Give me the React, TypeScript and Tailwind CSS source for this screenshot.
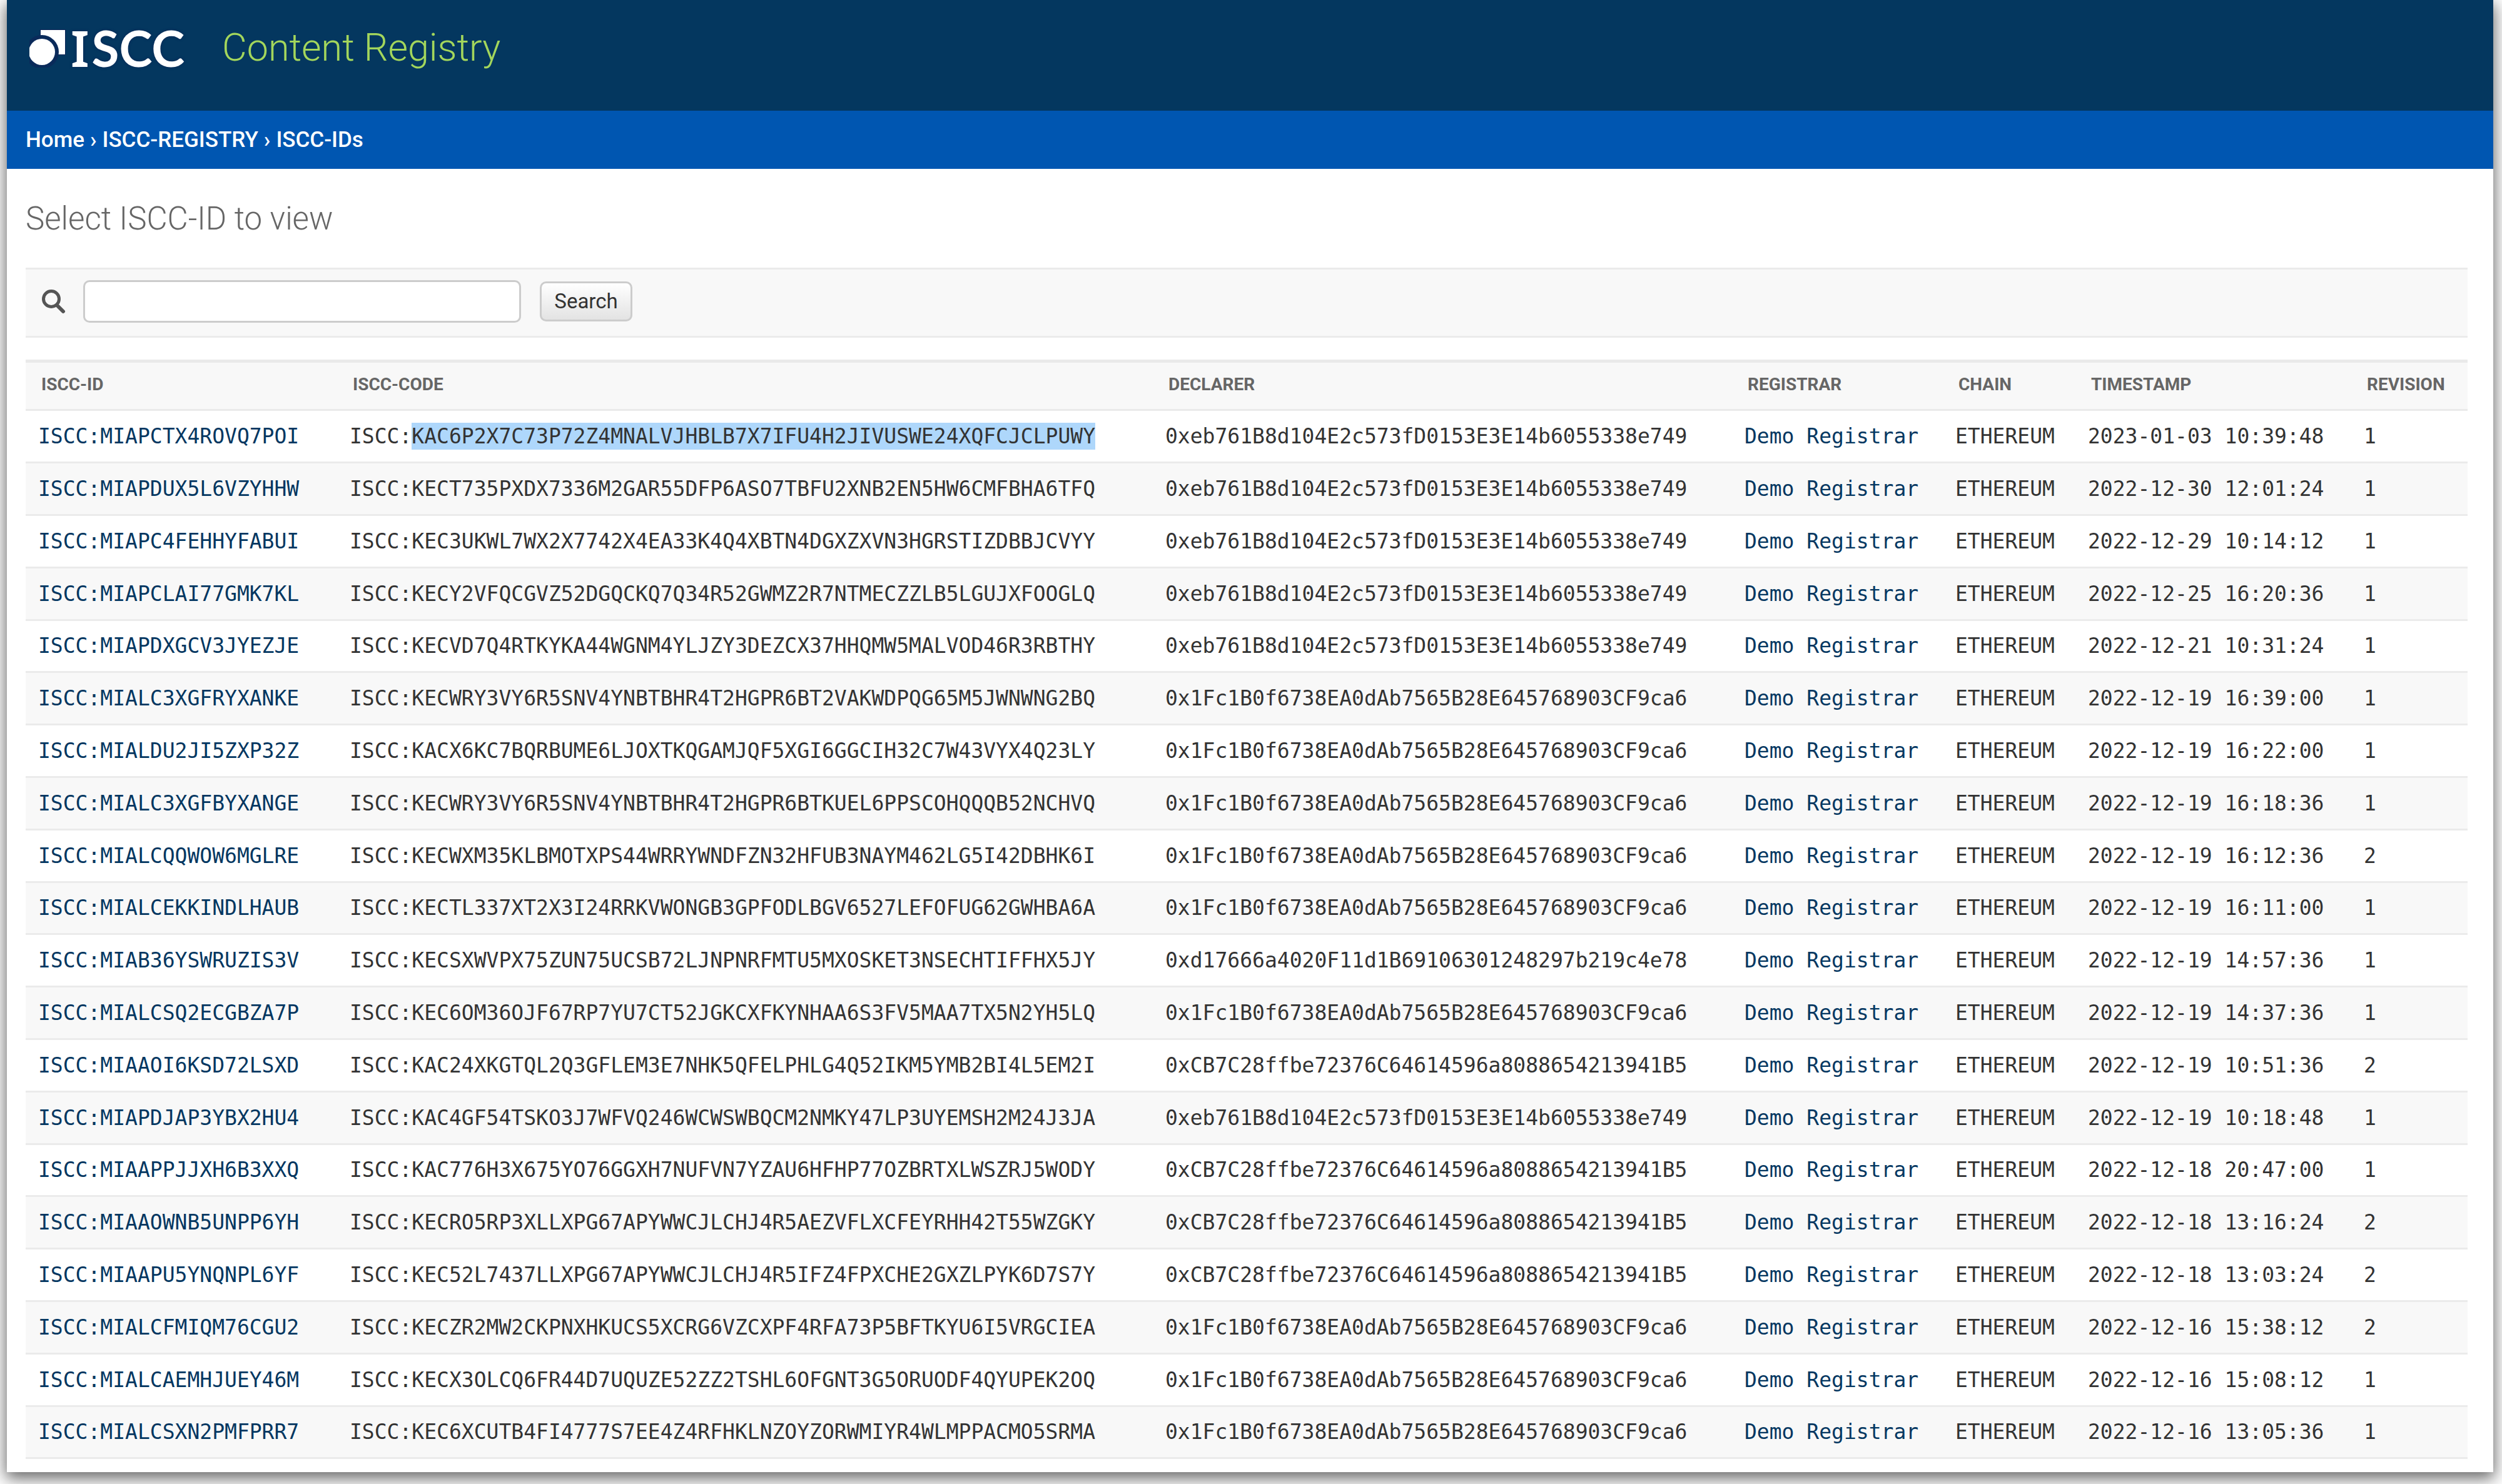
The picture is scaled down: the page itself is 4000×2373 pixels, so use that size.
import { useState } from 'react';

type Row = { id: string; code: string; declarer: string; timestamp: string; revision: number };

const EB = '0xeb761B8d104E2c573fD0153E3E14b6055338e749';
const FC = '0x1Fc1B0f6738EA0dAb7565B28E645768903CF9ca6';
const D1 = '0xd17666a4020F11d1B69106301248297b219c4e78';
const CB = '0xCB7C28ffbe72376C64614596a8088654213941B5';

const rows: Row[] = [
  { id: 'MIAPCTX4ROVQ7POI', code: 'KAC6P2X7C73P72Z4MNALVJHBLB7X7IFU4H2JIVUSWE24XQFCJCLPUWY', declarer: EB, timestamp: '2023-01-03 10:39:48', revision: 1 },
  { id: 'MIAPDUX5L6VZYHHW', code: 'KECT735PXDX7336M2GAR55DFP6ASO7TBFU2XNB2EN5HW6CMFBHA6TFQ', declarer: EB, timestamp: '2022-12-30 12:01:24', revision: 1 },
  { id: 'MIAPC4FEHHYFABUI', code: 'KEC3UKWL7WX2X7742X4EA33K4Q4XBTN4DGXZXVN3HGRSTIZDBBJCVYY', declarer: EB, timestamp: '2022-12-29 10:14:12', revision: 1 },
  { id: 'MIAPCLAI77GMK7KL', code: 'KECY2VFQCGVZ52DGQCKQ7Q34R52GWMZ2R7NTMECZZLB5LGUJXFOOGLQ', declarer: EB, timestamp: '2022-12-25 16:20:36', revision: 1 },
  { id: 'MIAPDXGCV3JYEZJE', code: 'KECVD7Q4RTKYKA44WGNM4YLJZY3DEZCX37HHQMW5MALVOD46R3RBTHY', declarer: EB, timestamp: '2022-12-21 10:31:24', revision: 1 },
  { id: 'MIALC3XGFRYXANKE', code: 'KECWRY3VY6R5SNV4YNBTBHR4T2HGPR6BT2VAKWDPQG65M5JWNWNG2BQ', declarer: FC, timestamp: '2022-12-19 16:39:00', revision: 1 },
  { id: 'MIALDU2JI5ZXP32Z', code: 'KACX6KC7BQRBUME6LJOXTKQGAMJQF5XGI6GGCIH32C7W43VYX4Q23LY', declarer: FC, timestamp: '2022-12-19 16:22:00', revision: 1 },
  { id: 'MIALC3XGFBYXANGE', code: 'KECWRY3VY6R5SNV4YNBTBHR4T2HGPR6BTKUEL6PPSCOHQQQB52NCHVQ', declarer: FC, timestamp: '2022-12-19 16:18:36', revision: 1 },
  { id: 'MIALCQQWOW6MGLRE', code: 'KECWXM35KLBMOTXPS44WRRYWNDFZN32HFUB3NAYM462LG5I42DBHK6I', declarer: FC, timestamp: '2022-12-19 16:12:36', revision: 2 },
  { id: 'MIALCEKKINDLHAUB', code: 'KECTL337XT2X3I24RRKVWONGB3GPFODLBGV6527LEFOFUG62GWHBA6A', declarer: FC, timestamp: '2022-12-19 16:11:00', revision: 1 },
  { id: 'MIAB36YSWRUZIS3V', code: 'KECSXWVPX75ZUN75UCSB72LJNPNRFMTU5MXOSKET3NSECHTIFFHX5JY', declarer: D1, timestamp: '2022-12-19 14:57:36', revision: 1 },
  { id: 'MIALCSQ2ECGBZA7P', code: 'KEC6OM36OJF67RP7YU7CT52JGKCXFKYNHAA6S3FV5MAA7TX5N2YH5LQ', declarer: FC, timestamp: '2022-12-19 14:37:36', revision: 1 },
  { id: 'MIAAOI6KSD72LSXD', code: 'KAC24XKGTQL2Q3GFLEM3E7NHK5QFELPHLG4Q52IKM5YMB2BI4L5EM2I', declarer: CB, timestamp: '2022-12-19 10:51:36', revision: 2 },
  { id: 'MIAPDJAP3YBX2HU4', code: 'KAC4GF54TSKO3J7WFVQ246WCWSWBQCM2NMKY47LP3UYEMSH2M24J3JA', declarer: EB, timestamp: '2022-12-19 10:18:48', revision: 1 },
  { id: 'MIAAPPJJXH6B3XXQ', code: 'KAC776H3X675YO76GGXH7NUFVN7YZAU6HFHP77OZBRTXLWSZRJ5WODY', declarer: CB, timestamp: '2022-12-18 20:47:00', revision: 1 },
  { id: 'MIAAOWNB5UNPP6YH', code: 'KECRO5RP3XLLXPG67APYWWCJLCHJ4R5AEZVFLXCFEYRHH42T55WZGKY', declarer: CB, timestamp: '2022-12-18 13:16:24', revision: 2 },
  { id: 'MIAAPU5YNQNPL6YF', code: 'KEC52L7437LLXPG67APYWWCJLCHJ4R5IFZ4FPXCHE2GXZLPYK6D7S7Y', declarer: CB, timestamp: '2022-12-18 13:03:24', revision: 2 },
  { id: 'MIALCFMIQM76CGU2', code: 'KECZR2MW2CKPNXHKUCS5XCRG6VZCXPF4RFA73P5BFTKYU6I5VRGCIEA', declarer: FC, timestamp: '2022-12-16 15:38:12', revision: 2 },
  { id: 'MIALCAEMHJUEY46M', code: 'KECX3OLCQ6FR44D7UQUZE52ZZ2TSHL6OFGNT3G5ORUODF4QYUPEK2OQ', declarer: FC, timestamp: '2022-12-16 15:08:12', revision: 1 },
  { id: 'MIALCSXN2PMFPRR7', code: 'KEC6XCUTB4FI4777S7EE4Z4RFHKLNZOYZORWMIYR4WLMPPACMO5SRMA', declarer: FC, timestamp: '2022-12-16 13:05:36', revision: 1 },
];

const columns = [
  { label: 'ISCC-ID', width: 'w-[498px]' },
  { label: 'ISCC-CODE', width: 'w-[1304px]' },
  { label: 'Declarer', width: 'w-[926px]' },
  { label: 'Registrar', width: 'w-[337px]' },
  { label: 'Chain', width: 'w-[212px]' },
  { label: 'Timestamp', width: 'w-[441px]' },
  { label: 'Revision', width: 'w-auto' },
];

function Logo() {
  return (
    <a href="#home" aria-label="ISCC" className="flex items-center gap-1">
      <svg viewBox="0 0 62 64" className="h-16 w-[62px]" aria-hidden="true">
        <path d="M18 4H57V43H40L18 20Z" fill="#fff" stroke="#0c2456" strokeWidth="2" paintOrder="stroke" />
        <circle cx="20" cy="39" r="27" fill="#0a2a5a" />
        <circle cx="20" cy="39" r="21" fill="#fff" />
      </svg>
      <span className="flex items-baseline gap-1 font-['Lato'] text-[80px] leading-[76px] font-bold text-white [text-shadow:0_0_4px_#0c2456]">
        <span className="font-['Noto_Sans'] font-semibold">I</span>
        <span>SCC</span>
      </span>
    </a>
  );
}

function SearchBar() {
  const [query, setQuery] = useState('');
  return (
    <form
      role="search"
      onSubmit={(e) => e.preventDefault()}
      className="mt-12 flex h-[112px] items-center border-y-[3px] border-[#ebebeb] bg-[#f8f8f8] pb-1 pl-6"
    >
      <label htmlFor="searchbar" className="flex">
        <svg viewBox="0 0 40 40" className="size-10" fill="none" stroke="#555" role="img" aria-label="Search">
          <circle cx="17" cy="16" r="12.5" strokeWidth="5" />
          <path d="M26 26L36 36" strokeWidth="6" strokeLinecap="round" />
        </svg>
      </label>
      <input
        id="searchbar"
        type="text"
        value={query}
        onChange={(e) => setQuery(e.target.value)}
        className="ml-7 h-[68px] w-[700px] rounded-[10px] border-[3px] border-[#ccc] bg-white px-3 text-[33px] text-[#333]"
      />
      <button
        type="submit"
        className="ml-[30px] h-[64px] w-[148px] rounded-[10px] border-[3px] border-[#ccc] bg-linear-to-b from-white to-[#e3e3e3] text-[33px] leading-[38px] text-[#333]"
      >
        Search
      </button>
    </form>
  );
}

function ResultTable() {
  return (
    <table className="mt-[35px] w-full table-fixed border-collapse text-left">
      <thead>
        <tr className="h-[78px] border-t-[5px] border-b-[3px] border-[#eaeaea] bg-[#f8f8f8]">
          {columns.map((c) => (
            <th
              key={c.label}
              scope="col"
              className={`${c.width} pb-1 pl-[25px] text-[28px] leading-[38px] font-bold text-[#666] uppercase`}
            >
              {c.label}
            </th>
          ))}
        </tr>
      </thead>
      <tbody className="font-['DejaVu_Sans_Mono',monospace] text-[33px] leading-[44px] whitespace-nowrap text-[#333]">
        {rows.map((r, i) => (
          <tr
            key={r.id}
            className="h-[84px] border-b-[3px] border-[#ebebeb] even:bg-[#f8f8f8] nth-[5n]:h-[83px]"
          >
            <th scope="row" className="pl-5 font-normal">
              <a href={`#${r.id}`} className="text-[#043761]">ISCC:{r.id}</a>
            </th>
            <td className="pl-5">
              ISCC:{i === 0 ? <mark className="bg-[#aed7fb] py-0.5 text-inherit">{r.code}</mark> : r.code}
            </td>
            <td className="pl-5">{r.declarer}</td>
            <td className="pl-5">
              <a href="#registrar" className="text-[#043761]">Demo Registrar</a>
            </td>
            <td className="pl-5">ETHEREUM</td>
            <td className="pl-5">{r.timestamp}</td>
            <td className="pl-5">{r.revision}</td>
          </tr>
        ))}
      </tbody>
    </table>
  );
}

export default function App() {
  return (
    <div className="overflow-hidden bg-white pr-[14px] pb-[21px] pl-[11px] font-['Roboto',sans-serif]">
      <div className="bg-white pb-[21px] shadow-[0_8px_24px_2px_rgba(0,0,0,0.6)]">
        <header className="flex h-[177px] items-start gap-[60px] bg-[#04375f] pt-[38px] pl-9">
          <Logo />
          <h1 className="text-[61px] leading-[76px] font-light">
            <a href="#home" className="text-[#a3d65c]">Content Registry</a>
          </h1>
        </header>
        <nav aria-label="Breadcrumbs" className="flex h-[93px] items-center gap-[9px] bg-[#0056b1] px-[30px] text-[35px] leading-[44px] font-medium text-white">
          <a href="#home">Home</a>
          <span>›</span>
          <a href="#registry">ISCC-REGISTRY</a>
          <span>›</span>
          <span>ISCC-IDs</span>
        </nav>
        <main className="pt-[50px] pr-[41px] pl-[30px]">
          <h2 className="text-[51px] leading-[60px] font-light text-[#666]">Select ISCC-ID to view</h2>
          <SearchBar />
          <ResultTable />
        </main>
      </div>
    </div>
  );
}
